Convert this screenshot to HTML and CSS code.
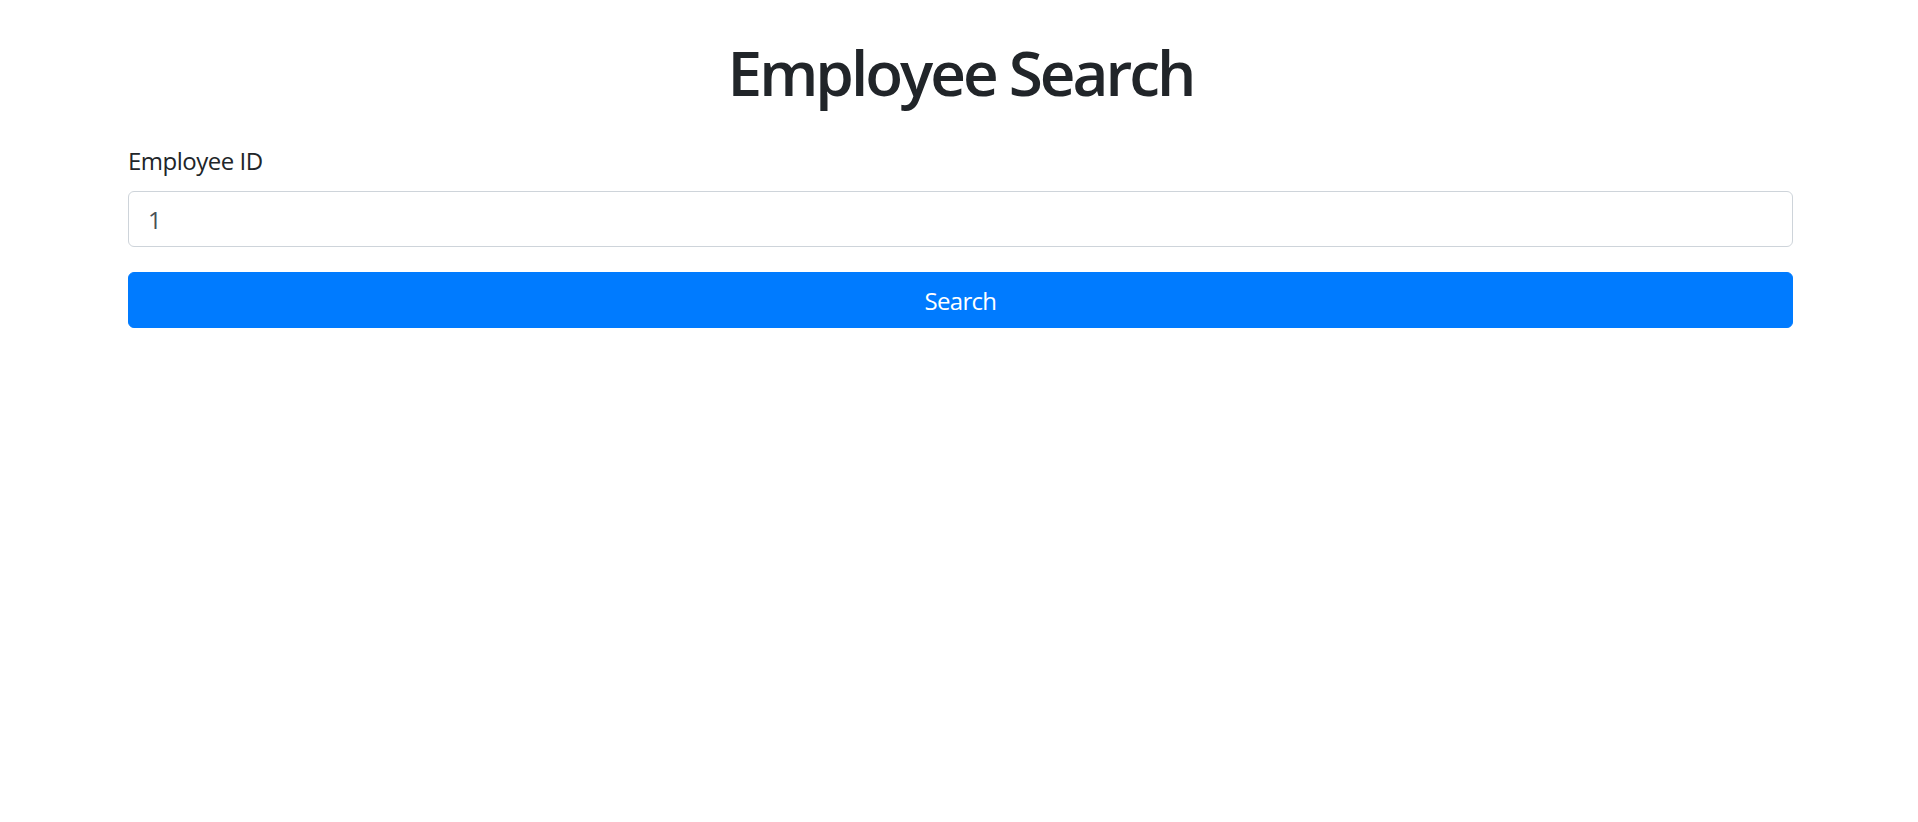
FILE: index.html
```html
<!DOCTYPE html>
<html lang="en">
<head>
<meta charset="utf-8">
<title>Employee Search</title>
<link rel="stylesheet" href="styles.css">
</head>
<body>
<div class="container">
  <h1 class="title">Employee Search</h1>
  <form class="search-form">
    <div class="form-group">
      <label class="form-label" for="empId">Employee ID</label>
      <input class="form-control" id="empId" type="text" value="1">
    </div>
    <button class="btn-primary" type="button">Search</button>
  </form>
</div>
</body>
</html>
```
FILE: styles.css
```css
html, body {
  margin: 0;
  padding: 0;
  background: #fff;
}
body {
  font-family: "Open Sans", "Noto Sans", sans-serif;
  color: #212529;
  font-size: 24px;
  line-height: 1.5;
}
.container {
  width: 1665px;
  margin: 0 0 0 128px;
}
.title {
  margin: 35px 0 34px;
  font-size: 62px;
  line-height: 1.2;
  font-weight: 600;
  letter-spacing: -3px;
  text-align: center;
}
.search-form {
  display: flex;
  flex-direction: column;
}
.form-group {
  display: flex;
  flex-direction: column;
  margin-bottom: 25px;
}
.form-label {
  margin-bottom: 12px;
  font-size: 24px;
  line-height: 36px;
  letter-spacing: -0.5px;
}
.form-control {
  box-sizing: border-box;
  height: 56px;
  padding: 0 19px;
  border: 1px solid #ced4da;
  border-radius: 6px;
  font-family: inherit;
  font-size: 24px;
  color: #495057;
  background: #fff;
  outline: none;
}
.btn-primary {
  box-sizing: border-box;
  height: 56px;
  border: 1px solid #007bff;
  border-radius: 6px;
  background: #007bff;
  color: #fff;
  font-family: inherit;
  font-size: 24px;
  letter-spacing: -0.7px;
  cursor: pointer;
}
```
